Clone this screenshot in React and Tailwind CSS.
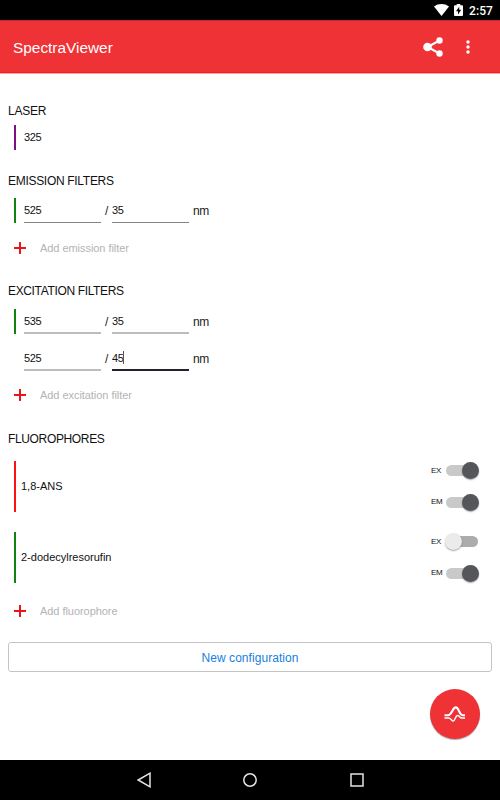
import React from "react";

function Heading({ children, className = "" }) {
  return (
    <h2 className={`ml-2 h-4 whitespace-nowrap text-[12px] leading-4 font-normal text-[#111] ${className}`}>
      {children}
    </h2>
  );
}

function Field({ value, focused = false, flat = false }) {
  const line = focused ? "border-b-2 border-[#20222c]" : flat ? "border-b border-[#858585]" : "border-b-2 border-[#bdbdbd]";
  return (
    <div className={`flex h-[25px] w-[77px] items-center ${line}`}>
      <span className="text-[11px] leading-[14px] tracking-[-0.4px] text-[#111]">{value}</span>
      {focused && <span className="h-[13px] w-px bg-[#555]" />}
    </div>
  );
}

function FilterRow({ center, width, marked = false, focused = false, flat = false }) {
  return (
    <div className="flex h-[25px] pl-[14px]">
      <div className={`mr-2 h-[25px] w-[2px] ${marked ? "bg-[#11810f]" : ""}`} />
      <Field value={center} flat={flat} />
      <span className="w-[11px] pl-1 text-[12px] leading-[27px] text-[#222]">/</span>
      <Field value={width} focused={focused} flat={flat} />
      <span className="ml-1 text-[12px] leading-[27px] tracking-[-0.3px] text-[#222]">nm</span>
    </div>
  );
}

function AddRow({ children, className = "" }) {
  return (
    <div className={`flex h-4 items-center pl-[14px] ${className}`}>
      <svg className="h-3 w-3" viewBox="0 0 12 12">
        <path d="M6 0v12M0 6h12" stroke="#e9151b" strokeWidth="2" />
      </svg>
      <span className="ml-[14px] whitespace-nowrap text-[11px] leading-4 tracking-[-0.05px] text-[#b3b3b3]">{children}</span>
    </div>
  );
}

function Toggle({ label, on }) {
  return (
    <div className="flex h-[18px] items-center">
      <span className="w-[14px] text-[8px] leading-[18px] tracking-[-0.3px] text-[#111]">
        <span className="-ml-px">{label}</span>
      </span>
      <div className={`flex h-[11px] w-8 items-center rounded-full ${on ? "justify-end bg-[#c9c9c9]" : "justify-start bg-[#acacac]"}`}>
        <div
          className={`h-[17px] w-[17px] shrink-0 rounded-full shadow-[0_1px_1.5px_rgba(0,0,0,0.35)] ${on ? "-mr-px bg-[#545659]" : "-ml-px bg-[#ebebeb]"}`}
        />
      </div>
    </div>
  );
}

function Fluorophore({ name, bar, ex, em, className = "" }) {
  return (
    <div className={`flex h-[51px] items-center pl-[14px] ${className}`}>
      <div className={`h-full w-[2px] ${bar}`} />
      <span className="mb-[2px] ml-[5px] flex-1 text-[11px] leading-4 text-[#111]">{name}</span>
      <div className="mr-[22px] flex h-[51px] flex-col gap-[13.5px] pt-[0.5px]">
        <Toggle label="EX" on={ex} />
        <Toggle label="EM" on={em} />
      </div>
    </div>
  );
}

function StatusBar() {
  return (
    <div className="flex h-5 items-center justify-end bg-black pr-[7px] text-white">
      <svg className="h-[12px] w-[15px]" viewBox="0 0 15 12">
        <path d="M0 2.5C4.2-.8 10.800-.8 15 2.500L7.500 12Z" fill="currentColor" />
      </svg>
      <svg className="ml-[5px] h-[12px] w-[9px]" viewBox="0 0 9 12">
        <path d="M2.700 0h3.600v1.200H8q1 0 1 1V11q0 1-1 1H1q-1 0-1-1V2.200q0-1 1-1h1.700Z" fill="currentColor" />
        <path d="M5.200 2.700 2 7.200h2v3.400l3.200-4.800H5.200Z" fill="#000" />
      </svg>
      <span className="mt-px ml-[6px] font-[Roboto] text-[12px] leading-5 font-medium tracking-[0.1px]">2:57</span>
    </div>
  );
}

export default function App() {
  return (
    <div className="relative flex h-[800px] w-[500px] flex-col overflow-hidden bg-white font-['Liberation_Sans',Arial,sans-serif]">
      <StatusBar />
      <header className="flex h-[53px] items-center border-t border-b border-t-[#c5262a] border-b-[#f3201f] bg-[#ef3236] pl-[13px] text-white shadow-[0_1px_0_#f9a9aa]">
        <h1 className="mt-[2px] flex-1 text-[15.4px] leading-5 font-normal">SpectraViewer</h1>
        <svg className="h-5 w-5" viewBox="0 0 20 20">
          <path d="M16.500 3.500 4.500 10l12 6.500" fill="none" stroke="currentColor" strokeWidth="2" />
          <circle cx="4.500" cy="10" r="4.300" fill="currentColor" />
          <circle cx="16.500" cy="3.500" r="3.200" fill="currentColor" />
          <circle cx="16.500" cy="16.500" r="3.200" fill="currentColor" />
        </svg>
        <svg className="mr-[30px] ml-[23px] h-[14px] w-1" viewBox="0 0 4 14">
          <circle cx="2" cy="2" r="1.700" fill="currentColor" />
          <circle cx="2" cy="7" r="1.700" fill="currentColor" />
          <circle cx="2" cy="12" r="1.700" fill="currentColor" />
        </svg>
      </header>

      <main className="flex flex-1 flex-col">
        <Heading className="mt-[30px] tracking-[-0.25px]">LASER</Heading>
        <div className="mt-[6px] flex h-[25px] items-center pl-[14px]">
          <div className="h-full w-[2px] bg-[#7d1085]" />
          <span className="mb-px ml-2 text-[11px] leading-4 tracking-[-0.4px] text-[#111]">325</span>
        </div>

        <Heading className="mt-[23px] tracking-[-0.3px]">EMISSION FILTERS</Heading>
        <div className="mt-[9px]">
          <FilterRow center="525" width="35" marked flat />
        </div>
        <AddRow className="mt-[17px]">Add emission filter</AddRow>

        <Heading className="mt-[27px] tracking-[-0.35px]">EXCITATION FILTERS</Heading>
        <div className="mt-[10px] flex flex-col gap-3">
          <FilterRow center="535" width="35" marked />
          <FilterRow center="525" width="45" focused />
        </div>
        <AddRow className="mt-4">Add excitation filter</AddRow>

        <Heading className="mt-7 tracking-[-0.35px]">FLUOROPHORES</Heading>
        <Fluorophore className="mt-[14px]" name="1,8-ANS" bar="bg-[#fb1313]" ex em />
        <Fluorophore className="mt-5" name="2-dodecylresorufin" bar="bg-[#11810f]" ex={false} em />
        <AddRow className="mt-5">Add fluorophore</AddRow>

        <button className="mx-2 mt-[23px] h-[30px] rounded-[3px] border border-[#c4c4c4] pt-px text-[12px] leading-4 tracking-[0.05px] text-[#1680df]">
          New configuration
        </button>
      </main>

      <button className="absolute top-[689px] left-[430px] flex h-[50px] w-[50px] items-center justify-center rounded-full bg-[#ef3236] text-white shadow-[0_1px_1px_rgba(0,0,0,0.35)]">
        <svg className="h-4 w-[22px]" viewBox="0 0 22 16" fill="none" stroke="currentColor">
          <path d="M.5 9.200H4C8 9.200 8.500 1.400 11.800 1.400S15 9.200 18.500 9.200h2.500" strokeWidth="2.100" />
          <path d="M.5 12h4c2.500 0 3 3 4.800 3s2-5.500 4.200-5.500S15.500 12 18 12h3" strokeWidth="1.400" />
        </svg>
      </button>

      <nav className="flex h-10 items-center bg-black text-[#e4e4e4]">
        <svg className="ml-[137px] h-4 w-[14px]" viewBox="0 0 14 16">
          <path d="M13 1.200v13.600L1.200 8Z" fill="none" stroke="currentColor" strokeWidth="1.500" />
        </svg>
        <svg className="ml-[92px] h-[14px] w-[14px]" viewBox="0 0 14 14">
          <circle cx="7" cy="7" r="6.200" fill="none" stroke="currentColor" strokeWidth="1.500" />
        </svg>
        <svg className="ml-[93px] h-[14px] w-[14px]" viewBox="0 0 14 14">
          <path d="M1 1h12v12H1Z" fill="none" stroke="currentColor" strokeWidth="1.500" />
        </svg>
      </nav>
    </div>
  );
}
